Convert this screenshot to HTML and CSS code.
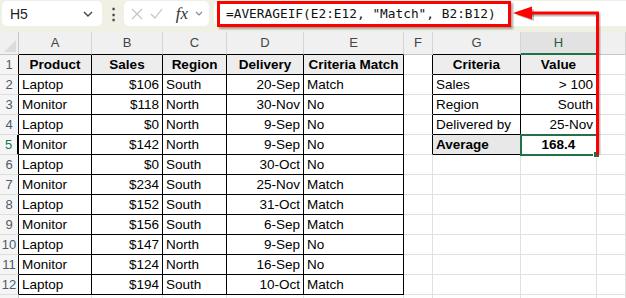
FILE: index.html
```html
<!DOCTYPE html>
<html lang="en">

<head>
    <meta charset="UTF-8">
    <meta name="viewport" content="width=device-width, initial-scale=1.0">
    <title>AVERAGEIF with criteria</title>
    <link rel="stylesheet" href="styles.css">
</head>

<body>
    <div class="toolbar">
        <div class="namebox">
            <span>H5</span>
            <svg class="chev" width="10" height="6" viewBox="0 0 10 6"><path d="M1 1l4 4 4-4" /></svg>
        </div>
        <div class="dots">&#8942;</div>
        <div class="fxbox">
            <svg class="ico" width="12" height="12" viewBox="0 0 12 12"><path d="M1 1l10 10M11 1L1 11" /></svg>
            <svg class="ico" width="13" height="11" viewBox="0 0 13 11"><path d="M1 6l4 4 7-9" /></svg>
            <span class="fx">fx</span>
            <svg class="chev small" width="8" height="5" viewBox="0 0 8 5"><path d="M1 1l3 3 3-3" /></svg>
        </div>
        <div class="formula">
            <div class="formula-text">=AVERAGEIF(E2:E12, "Match", B2:B12)</div>
        </div>
    </div>

    <div class="sheet">
        <!-- column headers -->
        <div class="c corner"><span class="tri"></span></div>
        <div class="c ch bb">A</div>
        <div class="c ch bb">B</div>
        <div class="c ch bb">C</div>
        <div class="c ch bb">D</div>
        <div class="c ch bb">E</div>
        <div class="c ch">F</div>
        <div class="c ch bb">G</div>
        <div class="c ch sel-col">H</div>
        <div class="c ch"></div>

        <!-- row 1 -->
        <div class="c rh bl">1</div>
        <div class="c t th">Product</div>
        <div class="c t th">Sales</div>
        <div class="c t th">Region</div>
        <div class="c t th">Delivery</div>
        <div class="c t th">Criteria Match</div>
        <div class="c bl"></div>
        <div class="c t th">Criteria</div>
        <div class="c t th">Value</div>
        <div class="c"></div>

        <!-- row 2 -->
        <div class="c rh bl">2</div>
        <div class="c t">Laptop</div>
        <div class="c t r">$106</div>
        <div class="c t">South</div>
        <div class="c t r">20-Sep</div>
        <div class="c t">Match</div>
        <div class="c bl"></div>
        <div class="c t">Sales</div>
        <div class="c t r">&gt; 100</div>
        <div class="c"></div>

        <!-- row 3 -->
        <div class="c rh bl">3</div>
        <div class="c t">Monitor</div>
        <div class="c t r">$118</div>
        <div class="c t">North</div>
        <div class="c t r">30-Nov</div>
        <div class="c t">No</div>
        <div class="c bl"></div>
        <div class="c t">Region</div>
        <div class="c t r">South</div>
        <div class="c"></div>

        <!-- row 4 -->
        <div class="c rh bl">4</div>
        <div class="c t">Laptop</div>
        <div class="c t r">$0</div>
        <div class="c t">North</div>
        <div class="c t r">9-Sep</div>
        <div class="c t">No</div>
        <div class="c bl"></div>
        <div class="c t">Delivered by</div>
        <div class="c t r">25-Nov</div>
        <div class="c"></div>

        <!-- row 5 -->
        <div class="c rh bl sel-row">5</div>
        <div class="c t">Monitor</div>
        <div class="c t r">$142</div>
        <div class="c t">North</div>
        <div class="c t r">9-Sep</div>
        <div class="c t">No</div>
        <div class="c bl"></div>
        <div class="c t hd b">Average</div>
        <div class="c t ctr b active">168.4</div>
        <div class="c"></div>

        <!-- rows 6 - 12 -->
        <div class="c rh bl">6</div>
        <div class="c t">Laptop</div>
        <div class="c t r">$0</div>
        <div class="c t">South</div>
        <div class="c t r">30-Oct</div>
        <div class="c t">No</div>
        <div class="c"></div>
        <div class="c"></div>
        <div class="c"></div>
        <div class="c"></div>

        <div class="c rh bl">7</div>
        <div class="c t">Monitor</div>
        <div class="c t r">$234</div>
        <div class="c t">South</div>
        <div class="c t r">25-Nov</div>
        <div class="c t">Match</div>
        <div class="c"></div>
        <div class="c"></div>
        <div class="c"></div>
        <div class="c"></div>

        <div class="c rh bl">8</div>
        <div class="c t">Laptop</div>
        <div class="c t r">$152</div>
        <div class="c t">South</div>
        <div class="c t r">31-Oct</div>
        <div class="c t">Match</div>
        <div class="c"></div>
        <div class="c"></div>
        <div class="c"></div>
        <div class="c"></div>

        <div class="c rh bl">9</div>
        <div class="c t">Monitor</div>
        <div class="c t r">$156</div>
        <div class="c t">South</div>
        <div class="c t r">6-Sep</div>
        <div class="c t">Match</div>
        <div class="c"></div>
        <div class="c"></div>
        <div class="c"></div>
        <div class="c"></div>

        <div class="c rh bl">10</div>
        <div class="c t">Laptop</div>
        <div class="c t r">$147</div>
        <div class="c t">North</div>
        <div class="c t r">9-Sep</div>
        <div class="c t">No</div>
        <div class="c"></div>
        <div class="c"></div>
        <div class="c"></div>
        <div class="c"></div>

        <div class="c rh bl">11</div>
        <div class="c t">Monitor</div>
        <div class="c t r">$124</div>
        <div class="c t">North</div>
        <div class="c t r">16-Sep</div>
        <div class="c t">No</div>
        <div class="c"></div>
        <div class="c"></div>
        <div class="c"></div>
        <div class="c"></div>

        <div class="c rh bl">12</div>
        <div class="c t">Laptop</div>
        <div class="c t r">$194</div>
        <div class="c t">South</div>
        <div class="c t r">10-Oct</div>
        <div class="c t">Match</div>
        <div class="c"></div>
        <div class="c"></div>
        <div class="c"></div>
        <div class="c"></div>

        <!-- row 13, only its top edge shows -->
        <div class="c rh"></div>
        <div class="c"></div>
        <div class="c"></div>
        <div class="c"></div>
        <div class="c"></div>
        <div class="c"></div>
        <div class="c"></div>
        <div class="c"></div>
        <div class="c"></div>
        <div class="c"></div>
    </div>

    <!-- callout arrow from the result cell to the formula -->
    <svg class="callout" width="626" height="298" viewBox="0 0 626 298">
        <g class="shadow">
            <path d="M599 155V15H530" />
            <path d="M516 15l18-6v12z" />
        </g>
        <g class="arrow">
            <path d="M597.5 155V13H528" />
            <path d="M513 13l19-6.5v13z" />
        </g>
    </svg>
</body>

</html>
```

FILE: styles.css
```css
body {
    margin: 0;
    width: 626px;
    height: 298px;
    overflow: hidden;
    position: relative;
    background: #fff;
    font-family: "Liberation Sans", Arial, sans-serif;
    color: #000;
}

/* formula bar */
.toolbar {
    height: 32px;
    box-sizing: border-box;
    padding: 1px 0 0 2px;
    display: flex;
    align-items: flex-start;
    background: #f1f0e4;
}

.namebox {
    width: 100px;
    height: 25px;
    box-sizing: border-box;
    padding: 0 9px 0 8px;
    display: flex;
    align-items: center;
    justify-content: space-between;
    background: #fff;
    border-radius: 5px;
    font-size: 14px;
    color: #222;
}

.chev path {
    fill: none;
    stroke: #444;
    stroke-width: 1.4;
}

.chev.small path {
    stroke: #888;
    stroke-width: 1.1;
}

.dots {
    width: 22px;
    height: 25px;
    line-height: 25px;
    text-align: center;
    font-size: 15px;
    font-weight: bold;
    color: #444;
}

.fxbox {
    width: 85px;
    height: 25px;
    box-sizing: border-box;
    padding: 0 6px 0 7px;
    display: flex;
    align-items: center;
    justify-content: space-between;
    background: #fff;
    border-radius: 5px;
}

.ico path {
    fill: none;
    stroke: #c4c4c4;
    stroke-width: 1.2;
}

.fx {
    font-family: "Liberation Serif", "Times New Roman", serif;
    font-style: italic;
    font-size: 17px;
    color: #333;
    margin-left: 6px;
}

.formula {
    flex: 1;
    height: 25px;
    margin-left: 5px;
    background: #fff;
    border-radius: 5px 0 0 5px;
}

.formula-text {
    width: 294px;
    height: 26px;
    margin-left: 3px;
    box-sizing: border-box;
    padding-left: 6px;
    border: 3px solid #ff0000;
    box-shadow: 2px 2px 2px rgba(0, 0, 0, 0.35);
    font-family: "DejaVu Sans Mono", "Liberation Mono", monospace;
    font-size: 12.8px;
    line-height: 20px;
    color: #111;
    white-space: nowrap;
}

/* grid */
.sheet {
    display: grid;
    grid-template-columns: 19px 73px 71px 64px 77px 100px 29px 88px 76px 1fr;
    grid-template-rows: 23px repeat(13, 20px);
}

.c {
    box-sizing: border-box;
    border-right: 1px solid #e1e1e1;
    border-bottom: 1px solid #e1e1e1;
    padding: 0 3px;
    font-size: 13.5px;
    line-height: 19px;
    white-space: nowrap;
    overflow: hidden;
}

.ch {
    background: #f0f0f0;
    border-right-color: #d4d4d4;
    border-bottom-color: #c6c6c6;
    text-align: center;
    font-size: 13px;
    line-height: 22px;
    color: #444;
}

.corner {
    position: relative;
    background: #f0f0f0;
    border-right-color: #c6c6c6;
    border-bottom-color: #c6c6c6;
}

.tri {
    position: absolute;
    right: 2px;
    bottom: 2px;
    width: 0;
    height: 0;
    border-left: 12px solid transparent;
    border-bottom: 12px solid #dcdcdc;
}

.rh {
    padding: 0;
    background: #f5f5f5;
    border-right-color: #c6c6c6;
    border-bottom-color: #dedede;
    text-align: center;
    font-size: 13px;
    color: #4f5b6a;
}

.sel-col {
    background: #e2e2e2;
    border-bottom: 2px solid #217346;
    color: #1e5e3a;
}

.sel-row {
    border-right: 2px solid #217346;
    color: #217346;
}

/* black borders of the data ranges */
.t {
    border-right-color: #000;
    border-bottom-color: #000;
}

.bl {
    border-right-color: #000;
}

.bb {
    border-bottom-color: #000;
}

.th {
    background: #ededed;
    text-align: center;
    font-weight: bold;
}

.hd {
    background: #e8e8e8;
}

.r {
    text-align: right;
}

.ctr {
    text-align: center;
}

.b {
    font-weight: bold;
}

.active {
    position: relative;
    overflow: visible;
    outline: 2px solid #217346;
    outline-offset: -1px;
}

.active::after {
    content: "";
    position: absolute;
    right: -4px;
    bottom: -4px;
    width: 5px;
    height: 5px;
    background: #217346;
    border: 1px solid #fff;
}

/* red callout */
.callout {
    position: absolute;
    left: 0;
    top: 0;
    pointer-events: none;
}

.callout path {
    fill: none;
    stroke-width: 3;
}

.callout .arrow path {
    stroke: #ff0000;
}

.callout .arrow path:last-child {
    fill: #ff0000;
    stroke: none;
}

.callout .shadow path {
    stroke: rgba(0, 0, 0, 0.25);
}

.callout .shadow path:last-child {
    fill: rgba(0, 0, 0, 0.25);
    stroke: none;
}
```
